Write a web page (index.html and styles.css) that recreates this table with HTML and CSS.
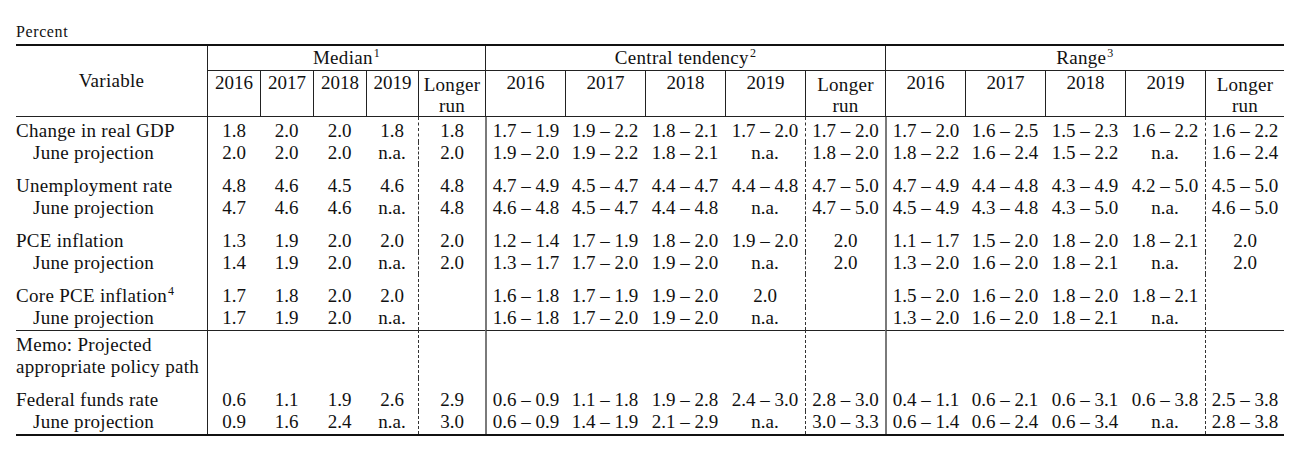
FILE: index.html
```html
<!DOCTYPE html>
<html>
<head>
<meta charset="utf-8">
<link rel="stylesheet" href="styles.css">
</head>
<body>
<div class="page">
  <div class="unit">Percent</div>
  <div class="tbl">
    <div class="grid head">
      <div class="var">Variable</div>
      <div class="grp">Median<sup class="fn">1</sup></div>
      <div class="grp">Central tendency<sup class="fn">2</sup></div>
      <div class="grp">Range<sup class="fn">3</sup></div>
      <div class="yr">2016</div><div class="yr">2017</div><div class="yr">2018</div><div class="yr">2019</div><div class="yr lr">Longer<br>run</div>
      <div class="yr">2016</div><div class="yr">2017</div><div class="yr">2018</div><div class="yr">2019</div><div class="yr lr">Longer<br>run</div>
      <div class="yr">2016</div><div class="yr">2017</div><div class="yr">2018</div><div class="yr">2019</div><div class="yr lr">Longer<br>run</div>
    </div>
    <div class="grid body">
      <div class="row top">
        <div>Change in real GDP</div>
        <div>1.8</div><div>2.0</div><div>2.0</div><div>1.8</div><div>1.8</div>
        <div>1.7 – 1.9</div><div>1.9 – 2.2</div><div>1.8 – 2.1</div><div>1.7 – 2.0</div><div>1.7 – 2.0</div>
        <div>1.7 – 2.0</div><div>1.6 – 2.5</div><div>1.5 – 2.3</div><div>1.6 – 2.2</div><div>1.6 – 2.2</div>
      </div>
      <div class="row sub">
        <div>June projection</div>
        <div>2.0</div><div>2.0</div><div>2.0</div><div>n.a.</div><div>2.0</div>
        <div>1.9 – 2.0</div><div>1.9 – 2.2</div><div>1.8 – 2.1</div><div>n.a.</div><div>1.8 – 2.0</div>
        <div>1.8 – 2.2</div><div>1.6 – 2.4</div><div>1.5 – 2.2</div><div>n.a.</div><div>1.6 – 2.4</div>
      </div>
      <div class="row g">
        <div>Unemployment rate</div>
        <div>4.8</div><div>4.6</div><div>4.5</div><div>4.6</div><div>4.8</div>
        <div>4.7 – 4.9</div><div>4.5 – 4.7</div><div>4.4 – 4.7</div><div>4.4 – 4.8</div><div>4.7 – 5.0</div>
        <div>4.7 – 4.9</div><div>4.4 – 4.8</div><div>4.3 – 4.9</div><div>4.2 – 5.0</div><div>4.5 – 5.0</div>
      </div>
      <div class="row sub">
        <div>June projection</div>
        <div>4.7</div><div>4.6</div><div>4.6</div><div>n.a.</div><div>4.8</div>
        <div>4.6 – 4.8</div><div>4.5 – 4.7</div><div>4.4 – 4.8</div><div>n.a.</div><div>4.7 – 5.0</div>
        <div>4.5 – 4.9</div><div>4.3 – 4.8</div><div>4.3 – 5.0</div><div>n.a.</div><div>4.6 – 5.0</div>
      </div>
      <div class="row g">
        <div>PCE inflation</div>
        <div>1.3</div><div>1.9</div><div>2.0</div><div>2.0</div><div>2.0</div>
        <div>1.2 – 1.4</div><div>1.7 – 1.9</div><div>1.8 – 2.0</div><div>1.9 – 2.0</div><div>2.0</div>
        <div>1.1 – 1.7</div><div>1.5 – 2.0</div><div>1.8 – 2.0</div><div>1.8 – 2.1</div><div>2.0</div>
      </div>
      <div class="row sub">
        <div>June projection</div>
        <div>1.4</div><div>1.9</div><div>2.0</div><div>n.a.</div><div>2.0</div>
        <div>1.3 – 1.7</div><div>1.7 – 2.0</div><div>1.9 – 2.0</div><div>n.a.</div><div>2.0</div>
        <div>1.3 – 2.0</div><div>1.6 – 2.0</div><div>1.8 – 2.1</div><div>n.a.</div><div>2.0</div>
      </div>
      <div class="row g">
        <div>Core PCE inflation<sup class="fn">4</sup></div>
        <div>1.7</div><div>1.8</div><div>2.0</div><div>2.0</div><div></div>
        <div>1.6 – 1.8</div><div>1.7 – 1.9</div><div>1.9 – 2.0</div><div>2.0</div><div></div>
        <div>1.5 – 2.0</div><div>1.6 – 2.0</div><div>1.8 – 2.0</div><div>1.8 – 2.1</div><div></div>
      </div>
      <div class="row sub end">
        <div>June projection</div>
        <div>1.7</div><div>1.9</div><div>2.0</div><div>n.a.</div><div></div>
        <div>1.6 – 1.8</div><div>1.7 – 2.0</div><div>1.9 – 2.0</div><div>n.a.</div><div></div>
        <div>1.3 – 2.0</div><div>1.6 – 2.0</div><div>1.8 – 2.1</div><div>n.a.</div><div></div>
      </div>
      <div class="row memo">
        <div>Memo: Projected<br>appropriate policy path</div>
        <div></div><div></div><div></div><div></div><div></div>
        <div></div><div></div><div></div><div></div><div></div>
        <div></div><div></div><div></div><div></div><div></div>
      </div>
      <div class="row g">
        <div>Federal funds rate</div>
        <div>0.6</div><div>1.1</div><div>1.9</div><div>2.6</div><div>2.9</div>
        <div>0.6 – 0.9</div><div>1.1 – 1.8</div><div>1.9 – 2.8</div><div>2.4 – 3.0</div><div>2.8 – 3.0</div>
        <div>0.4 – 1.1</div><div>0.6 – 2.1</div><div>0.6 – 3.1</div><div>0.6 – 3.8</div><div>2.5 – 3.8</div>
      </div>
      <div class="row sub end">
        <div>June projection</div>
        <div>0.9</div><div>1.6</div><div>2.4</div><div>n.a.</div><div>3.0</div>
        <div>0.6 – 0.9</div><div>1.4 – 1.9</div><div>2.1 – 2.9</div><div>n.a.</div><div>3.0 – 3.3</div>
        <div>0.6 – 1.4</div><div>0.6 – 2.4</div><div>0.6 – 3.4</div><div>n.a.</div><div>2.8 – 3.8</div>
      </div>
    </div>
  </div>
</div>
</body>
</html>
```

FILE: styles.css
```css
html, body {
  margin: 0;
  background: #ffffff;
}

body {
  color: #111111;
  font-family: "Liberation Serif", "Times New Roman", serif;
}

.page {
  width: 1268px;
  padding: 23px 0 0 16px;
}

.unit {
  font-size: 16px;
  line-height: 18px;
  letter-spacing: 0.6px;
  margin-bottom: 3px;
}

.tbl {
  border-top: 2px solid #111;
  border-bottom: 2px solid #111;
  font-size: 19px;
}

.grid {
  display: grid;
  grid-template-columns: 191px 53px 53px 53px 52px 67px 80px 80px 80px 80px 80px 80px 80px 80px 80px 79px;
}

.grid div {
  box-sizing: border-box;
}

.fn {
  font-size: 12px;
  line-height: 0;
  vertical-align: 7px;
  margin-left: 1px;
}

/* header */
.head {
  border-bottom: 1px solid #222;
}

.var {
  grid-row: 1 / span 2;
  display: flex;
  align-items: center;
  justify-content: center;
  letter-spacing: 0.3px;
}

.grp {
  grid-column: span 5;
  text-align: center;
  line-height: 22px;
  padding: 1px 0;
  border-left: 1px solid #222;
  border-bottom: 1px solid #222;
  letter-spacing: 0.3px;
}

.yr {
  text-align: center;
  line-height: 22px;
  padding-top: 1px;
  height: 45px;
  border-left: 1px solid #222;
}

.yr.lr {
  padding-top: 3px;
  line-height: 21px;
  letter-spacing: 0.3px;
}

/* body */
.row {
  display: contents;
}

.row > div {
  line-height: 22px;
  text-align: center;
  white-space: nowrap;
}

.row > div:first-child {
  text-align: left;
  letter-spacing: 0.3px;
}

.row.sub > div:first-child {
  padding-left: 17px;
}

.row > div:nth-child(2) {
  border-left: 1px solid #222;
}

.row > div:nth-child(6),
.row > div:nth-child(11),
.row > div:nth-child(16) {
  border-left: 1px dashed #333;
}

.row > div:nth-child(7),
.row > div:nth-child(12) {
  border-left: 2px solid #7a7a7a;
}

.row.top > div {
  padding-top: 3px;
}

.row.g > div {
  padding-top: 11px;
}

.row.end > div {
  padding-bottom: 1px;
}

.row.memo > div {
  border-top: 1px solid #222;
  padding-top: 3px;
}
```
